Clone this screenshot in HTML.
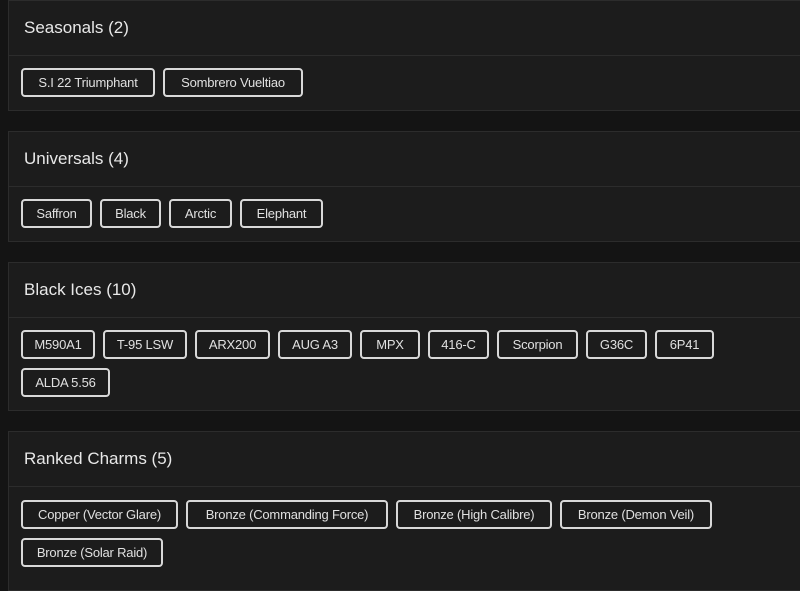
<!DOCTYPE html>
<html><head><style>
*{box-sizing:border-box;margin:0;padding:0}
body{width:800px;height:580px;overflow:hidden;background:#141414;font-family:"Liberation Sans",sans-serif;color:#e6e6e6}
.card{position:absolute;left:8px;width:800px;background:#1c1c1c;border:1px solid #2c2c2c}
.hd{height:55px;border-bottom:1px solid #2c2c2c;font-size:17px;padding-left:15px;line-height:54px;color:#e8e8e8}
.bd{position:relative;padding:12px 0 0 12px;display:flex;flex-wrap:wrap;gap:10px 0}
.c{height:29px;border:2px solid #d8d8d8;border-radius:4px;font-size:13px;line-height:25px;text-align:center;color:#e0e0e0;margin-right:8px;white-space:nowrap;letter-spacing:-0.2px}
</style></head><body>
<div class="card" style="top:0;height:111px"><div class="hd">Seasonals (2)</div><div class="bd">
<div class="c" style="width:134px">S.I 22 Triumphant</div><div class="c" style="width:140px">Sombrero Vueltiao</div></div></div>
<div class="card" style="top:131px;height:111px"><div class="hd">Universals (4)</div><div class="bd">
<div class="c" style="width:71px">Saffron</div><div class="c" style="width:61px">Black</div><div class="c" style="width:63px">Arctic</div><div class="c" style="width:83px">Elephant</div></div></div>
<div class="card" style="top:262px;height:149px"><div class="hd">Black Ices (10)</div><div class="bd" style="gap:9px 0">
<div class="c" style="width:74px">M590A1</div><div class="c" style="width:84px">T-95 LSW</div><div class="c" style="width:75px">ARX200</div><div class="c" style="width:74px">AUG A3</div><div class="c" style="width:60px">MPX</div><div class="c" style="width:61px">416-C</div><div class="c" style="width:81px">Scorpion</div><div class="c" style="width:61px">G36C</div><div class="c" style="width:59px">6P41</div><div class="c" style="width:89px">ALDA 5.56</div></div></div>
<div class="card" style="top:431px;height:160px"><div class="hd">Ranked Charms (5)</div><div class="bd" style="padding-top:13px;gap:9px 0">
<div class="c" style="width:157px">Copper (Vector Glare)</div><div class="c" style="width:202px">Bronze (Commanding Force)</div><div class="c" style="width:156px">Bronze (High Calibre)</div><div class="c" style="width:152px">Bronze (Demon Veil)</div><div class="c" style="width:142px">Bronze (Solar Raid)</div></div></div>
</body></html>
